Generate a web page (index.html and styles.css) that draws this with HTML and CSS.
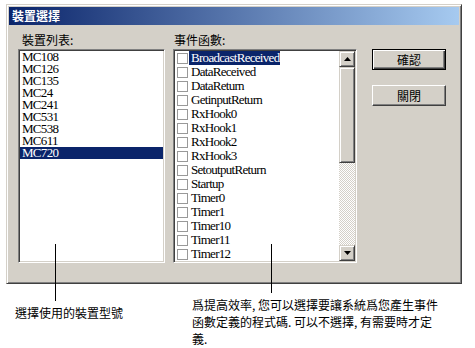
FILE: index.html
```html
<!DOCTYPE html>
<html lang="zh-Hant">
<head>
  <meta charset="UTF-8" />
  <title>裝置選擇</title>
  <link rel="stylesheet" href="styles.css">
</head>
<body>
  <div class="page">
    <div class="dialog">
      <div class="title">裝置選擇</div>
      <div class="dlg-body">
        <!-- Devices -->
        <div class="col devices-col">
          <div class="label">裝置列表:</div>
          <ul class="listbox devices">
            <li>MC108</li>
            <li>MC126</li>
            <li>MC135</li>
            <li>MC24</li>
            <li>MC241</li>
            <li>MC531</li>
            <li>MC538</li>
            <li>MC611</li>
            <li class="selected">MC720</li>
          </ul>
        </div>

        <!-- Events -->
        <div class="col events-col">
          <div class="label label-events">事件函數:</div>
          <div class="listbox events">
            <ul class="event-list">
              <li class="selected"><span class="check"></span><span class="name">BroadcastReceived</span></li>
              <li><span class="check"></span><span class="name">DataReceived</span></li>
              <li><span class="check"></span><span class="name">DataReturn</span></li>
              <li><span class="check"></span><span class="name">GetinputReturn</span></li>
              <li><span class="check"></span><span class="name">RxHook0</span></li>
              <li><span class="check"></span><span class="name">RxHook1</span></li>
              <li><span class="check"></span><span class="name">RxHook2</span></li>
              <li><span class="check"></span><span class="name">RxHook3</span></li>
              <li><span class="check"></span><span class="name">SetoutputReturn</span></li>
              <li><span class="check"></span><span class="name">Startup</span></li>
              <li><span class="check"></span><span class="name">Timer0</span></li>
              <li><span class="check"></span><span class="name">Timer1</span></li>
              <li><span class="check"></span><span class="name">Timer10</span></li>
              <li><span class="check"></span><span class="name">Timer11</span></li>
              <li><span class="check"></span><span class="name">Timer12</span></li>
            </ul>
            <div class="scrollbar">
              <div class="sb-btn">
                <svg width="7" height="4" viewBox="0 0 7 4"><path d="M3.5 0 L7 4 L0 4 Z" fill="#000"/></svg>
              </div>
              <div class="sb-track"><div class="sb-thumb"></div></div>
              <div class="sb-btn">
                <svg width="7" height="4" viewBox="0 0 7 4"><path d="M0 0 L7 0 L3.5 4 Z" fill="#000"/></svg>
              </div>
            </div>
          </div>
        </div>

        <!-- Buttons -->
        <div class="buttons">
          <button class="btn btn-default">確認</button>
          <button class="btn">關閉</button>
        </div>
      </div>
    </div>

    <div class="notes">
      <p class="note note-left">選擇使用的裝置型號</p>
      <p class="note note-right">爲提高效率, 您可以選擇要讓系統爲您產生事件<br>函數定義的程式碼. 可以不選擇, 有需要時才定<br>義.</p>
    </div>

    <div class="pointer pointer-left"></div>
    <div class="pointer pointer-right"></div>
  </div>
</body>
</html>
```

FILE: styles.css
```css
* {
  box-sizing: border-box;
}

body {
  margin: 0;
  background: #fff;
  font-family: "Liberation Sans", "Noto Sans CJK TC", sans-serif;
  font-size: 12px;
  color: #000;
}

.page {
  position: relative;
  width: 475px;
  height: 348px;
  padding: 4px 0 0 6px;
}

/* Dialog frame */
.dialog {
  width: 456px;
  height: 280px;
  padding: 2px;
  background: #d4d0c8;
  border: 1px solid;
  border-color: #d4d0c8 #404040 #404040 #d4d0c8;
  box-shadow: inset 1px 1px #fff, inset -1px -1px #808080;
}

.title {
  height: 18px;
  line-height: 18px;
  padding-left: 3px;
  color: #fff;
  font-weight: bold;
  font-family: "Noto Sans CJK TC", sans-serif;
  background: linear-gradient(to right, #0a246a, #a6caf0);
}

.dlg-body {
  display: flex;
  padding: 8px 0 0 9px;
}

.label {
  height: 14px;
  line-height: 14px;
  margin-bottom: 2px;
  padding-left: 4px;
  font-family: "Noto Sans CJK TC", sans-serif;
}

.label-events {
  padding-left: 1px;
}

.devices-col {
  width: 147px;
  margin-right: 8px;
}

.events-col {
  width: 184px;
  margin-right: 15px;
}

/* Sunken list boxes */
.listbox {
  margin: 0;
  padding: 1px;
  list-style: none;
  height: 214px;
  background: #fff;
  border: 1px solid;
  border-color: #808080 #fff #fff #808080;
  box-shadow: inset 1px 1px #404040, inset -1px -1px #d4d0c8;
  font-family: "Liberation Serif", serif;
  font-size: 13px;
  letter-spacing: -0.7px;
}

.devices li {
  height: 12px;
  line-height: 12px;
  padding-left: 2px;
}

.devices li.selected {
  background: #0a246a;
  color: #fff;
}

.events {
  display: flex;
}

.event-list {
  flex: 1;
  margin: 0;
  padding: 0;
  list-style: none;
}

.event-list li {
  display: flex;
  align-items: center;
  height: 14px;
}

.check {
  width: 11px;
  height: 11px;
  margin-left: 2px;
  margin-right: 1px;
  border: 1px solid #999;
  background: #fff;
}

.name {
  height: 14px;
  line-height: 14px;
  padding: 0 1px 0 2px;
}

.event-list li.selected .name {
  background: #0a246a;
  color: #fff;
}

/* Scrollbar */
.scrollbar {
  display: flex;
  flex-direction: column;
  width: 16px;
}

.sb-btn {
  display: flex;
  align-items: center;
  justify-content: center;
  height: 16px;
  background: #d4d0c8;
  border: 1px solid;
  border-color: #d4d0c8 #404040 #404040 #d4d0c8;
  box-shadow: inset 1px 1px #fff, inset -1px -1px #808080;
}

.sb-track {
  flex: 1;
  background: repeating-conic-gradient(#fff 0 25%, #d4d0c8 0 50%) 0 0 / 2px 2px;
}

.sb-thumb {
  height: 96px;
  background: #d4d0c8;
  border: 1px solid;
  border-color: #d4d0c8 #404040 #404040 #d4d0c8;
  box-shadow: inset 1px 1px #fff, inset -1px -1px #808080;
}

/* Buttons */
.buttons {
  display: flex;
  flex-direction: column;
  gap: 15px;
  padding-top: 16px;
}

.btn {
  width: 74px;
  height: 21px;
  padding: 0;
  font-family: "Noto Sans CJK TC", sans-serif;
  font-size: 12px;
  color: #000;
  background: #d4d0c8;
  border: 1px solid;
  border-color: #fff #404040 #404040 #fff;
  box-shadow: inset -1px -1px #808080;
}

.btn-default {
  border: 1px solid #000;
  box-shadow: inset 1px 1px #fff, inset -1px -1px #404040, inset -2px -2px #808080;
}

/* Annotations */
.notes {
  display: flex;
  align-items: flex-start;
  padding-left: 9px;
}

.note {
  margin: 0;
  font-family: "Noto Sans CJK TC", sans-serif;
}

.note-left {
  width: 177px;
  margin-top: 21px;
  line-height: 16px;
}

.note-right {
  margin-top: 12px;
  line-height: 17px;
  white-space: nowrap;
}

.pointer {
  position: absolute;
  width: 1px;
  background: #000;
}

.pointer-left {
  left: 55px;
  top: 244px;
  height: 57px;
}

.pointer-right {
  left: 271px;
  top: 244px;
  height: 49px;
}
```
